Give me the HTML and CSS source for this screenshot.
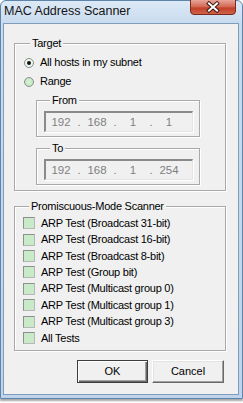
FILE: index.html
```html
<!DOCTYPE html>
<html>
<head>
<meta charset="utf-8">
<link rel="stylesheet" href="styles.css">
</head>
<body>
<div class="window">
  <div class="titlebar">
    <span class="title">MAC Address Scanner</span>
    <svg class="close" width="46" height="15" viewBox="0 0 46 15">
      <defs>
        <linearGradient id="cg" x1="0" y1="0" x2="0" y2="1">
          <stop offset="0" stop-color="#e8a598"/>
          <stop offset="0.45" stop-color="#d46a55"/>
          <stop offset="0.55" stop-color="#c2412a"/>
          <stop offset="1" stop-color="#d0654a"/>
        </linearGradient>
      </defs>
      <path d="M0.5 0 V11 Q0.5 14.5 4 14.5 H42 Q45.5 14.5 45.5 11 V0" fill="url(#cg)" stroke="#7a2a1e"/>
      <path d="M19 3.5 L27 10.5 M27 3.5 L19 10.5" stroke="#3b1a14" stroke-width="4" stroke-linecap="square"/>
      <path d="M19 3.5 L27 10.5 M27 3.5 L19 10.5" stroke="#ffffff" stroke-width="2" stroke-linecap="square"/>
    </svg>
  </div>
  <div class="client">
    <fieldset class="group target">
      <legend>Target</legend>
      <div class="radio-row"><span class="radio checked"></span><span>All hosts in my subnet</span></div>
      <div class="radio-row"><span class="radio"></span><span>Range</span></div>
      <fieldset class="group sub from">
        <legend>From</legend>
        <div class="ip">
          <span class="oct">192</span><span class="dot">.</span><span class="oct">168</span><span class="dot">.</span><span class="oct">1</span><span class="dot">.</span><span class="oct">1</span>
        </div>
      </fieldset>
      <fieldset class="group sub to">
        <legend>To</legend>
        <div class="ip">
          <span class="oct">192</span><span class="dot">.</span><span class="oct">168</span><span class="dot">.</span><span class="oct">1</span><span class="dot">.</span><span class="oct">254</span>
        </div>
      </fieldset>
    </fieldset>
    <fieldset class="group promisc">
      <legend>Promiscuous-Mode Scanner</legend>
      <div class="check-row"><span class="check"></span><span>ARP Test (Broadcast 31-bit)</span></div>
      <div class="check-row"><span class="check"></span><span>ARP Test (Broadcast 16-bit)</span></div>
      <div class="check-row"><span class="check"></span><span>ARP Test (Broadcast 8-bit)</span></div>
      <div class="check-row"><span class="check"></span><span>ARP Test (Group bit)</span></div>
      <div class="check-row"><span class="check"></span><span>ARP Test (Multicast group 0)</span></div>
      <div class="check-row"><span class="check"></span><span>ARP Test (Multicast group 1)</span></div>
      <div class="check-row"><span class="check"></span><span>ARP Test (Multicast group 3)</span></div>
      <div class="check-row"><span class="check"></span><span>All Tests</span></div>
    </fieldset>
    <div class="buttons">
      <button class="btn default">OK</button>
      <button class="btn">Cancel</button>
    </div>
  </div>
</div>
</body>
</html>
```
FILE: styles.css
```css
* { box-sizing: border-box; }
html, body { margin: 0; padding: 0; background: #ffffff; }
body { width: 243px; height: 403px; overflow: hidden; }

.window {
  width: 243px;
  height: 399px;
  display: flex;
  flex-direction: column;
  border: 1px solid #5f84ac;
  border-radius: 6px 6px 0 0;
  padding: 0 3px 3px 2px;
  background: linear-gradient(#dce9f6, #c9dbef 22px, #bfd3ea);
  box-shadow: 0 2px 2px rgba(0,0,0,0.35);
}

.titlebar {
  height: 22px;
  display: flex;
  justify-content: space-between;
  align-items: flex-start;
  flex: none;
}
.title {
  margin: 3px 0 0 1px;
  font: 12.5px/14px "Liberation Sans", Arial, sans-serif;
  color: #141414;
}
.close { display: block; margin-right: 3px; margin-top: -1px; }

.client {
  flex: 1;
  background: #f0f0f0;
  border: 1px solid #7f9cbb;
  font: 11px/13px "Liberation Sans", Arial, sans-serif;
  letter-spacing: -0.25px;
  color: #000;
  display: flex;
  flex-direction: column;
  align-items: flex-start;
  padding: 0 0 0 10px;
}

.group {
  margin: 0;
  padding: 0;
  border: 1px solid #a9a9a9;
  box-shadow: inset 1px 1px 0 #fff, 1px 1px 0 #fff;
  min-width: 0;
}
.group > legend {
  margin-left: 6px;
  padding: 0 2px 0 2px;
  background: #f0f0f0;
  line-height: 13px;
}

.target {
  width: 212px;
  margin-top: 13px;
  padding: 3px 0 5px 9px;
}
.radio-row {
  display: flex;
  align-items: center;
  height: 19px;
  gap: 6px;
}
.radio {
  width: 10px;
  height: 10px;
  border-radius: 50%;
  border: 1px solid #8d8d8d;
  background: radial-gradient(circle at 50% 50%, #d6f3d6 0, #c3e8c3 70%);
  display: flex;
  align-items: center;
  justify-content: center;
}
.radio.checked { background: radial-gradient(circle, #ffffff 0, #e6f5e6 80%); }
.radio.checked::after {
  content: "";
  width: 4px;
  height: 4px;
  border-radius: 50%;
  background: #111;
}

.sub {
  width: 164px;
  margin-left: 12px;
  padding: 4px 0 4px 7px;
}
.from { margin-top: 3px; }
.to { margin-top: 5px; }

.ip {
  width: 149px;
  height: 21px;
  border-top: 2px solid #8a8a8a;
  border-left: 2px solid #8a8a8a;
  border-bottom: 1px solid #e4e4e4;
  border-right: 1px solid #e4e4e4;
  box-shadow: 1px 1px 0 #ffffff;
  display: flex;
  align-items: center;
  padding-left: 1px;
  color: #808080;
  font-size: 11.5px;
  letter-spacing: 0;
}
.oct { width: 28px; text-align: center; }
.dot { width: 8px; text-align: center; }

.promisc {
  width: 212px;
  margin-top: 9px;
  padding: 2px 0 4px 8px;
}
.check-row {
  display: flex;
  align-items: center;
  height: 16.43px;
  gap: 6px;
}
.check {
  width: 12px;
  height: 12px;
  border: 1px solid #8f8f8f;
  border-right-color: #b7b7b7;
  border-bottom-color: #b7b7b7;
  background: #c8eac8;
  flex: none;
}

.buttons {
  display: flex;
  gap: 4px;
  margin-top: 9px;
  margin-left: 63px;
}
.btn {
  width: 72px;
  height: 23px;
  padding: 0;
  font: 11px/13px "Liberation Sans", Arial, sans-serif;
  color: #000;
  background: #f0f0f0;
  border: 1px solid;
  border-color: #ffffff #696969 #696969 #ffffff;
  box-shadow: inset -1px -1px 0 #a0a0a0, inset 1px 1px 0 #e3e3e3;
}
.btn.default {
  width: 71px;
  border: 1px solid #3c3c3c;
  box-shadow: inset 1px 1px 0 #ffffff, inset -1px -1px 0 #696969, inset -2px -2px 0 #a0a0a0;
}
```
